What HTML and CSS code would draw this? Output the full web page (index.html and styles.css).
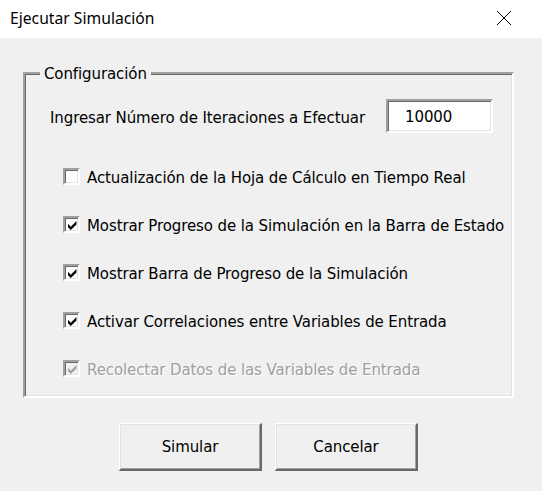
FILE: index.html
```html
<!DOCTYPE html>
<html lang="es">
<head>
<meta charset="utf-8">
<link rel="stylesheet" href="styles.css">
</head>
<body>
<div class="window">
  <div class="titlebar">
    <span class="title">Ejecutar Simulación</span>
    <svg class="close" width="16" height="16" viewBox="0 0 16 16"><path d="M1 1 L15 15 M15 1 L1 15" stroke="#000" stroke-width="1" fill="none"/></svg>
  </div>
  <div class="content">
    <div class="frame">
      <span class="legend">Configuración</span>
      <div class="iter-row">
        <span class="label">Ingresar Número de Iteraciones a Efectuar</span>
        <div class="textbox">10000</div>
      </div>
      <div class="checks">
        <div class="check-row">
          <span class="box"></span>
          <span class="label">Actualización de la Hoja de Cálculo en Tiempo Real</span>
        </div>
        <div class="check-row">
          <span class="box"><svg viewBox="0 0 8 8"><path d="M0 2.5 L2.5 5 L7.5 0 L7.5 3 L2.5 8 L0 5.5 Z" fill="#000"/></svg></span>
          <span class="label">Mostrar Progreso de la Simulación en la Barra de Estado</span>
        </div>
        <div class="check-row">
          <span class="box"><svg viewBox="0 0 8 8"><path d="M0 2.5 L2.5 5 L7.5 0 L7.5 3 L2.5 8 L0 5.5 Z" fill="#000"/></svg></span>
          <span class="label">Mostrar Barra de Progreso de la Simulación</span>
        </div>
        <div class="check-row">
          <span class="box"><svg viewBox="0 0 8 8"><path d="M0 2.5 L2.5 5 L7.5 0 L7.5 3 L2.5 8 L0 5.5 Z" fill="#000"/></svg></span>
          <span class="label">Activar Correlaciones entre Variables de Entrada</span>
        </div>
        <div class="check-row disabled">
          <span class="box"><svg viewBox="0 0 8 8"><path d="M0 2.5 L2.5 5 L7.5 0 L7.5 3 L2.5 8 L0 5.5 Z" fill="#a0a0a0"/></svg></span>
          <span class="label">Recolectar Datos de las Variables de Entrada</span>
        </div>
      </div>
    </div>
    <div class="buttons">
      <div class="btn">Simular</div>
      <div class="btn">Cancelar</div>
    </div>
  </div>
</div>
</body>
</html>
```
FILE: styles.css
```css
html, body {
  margin: 0;
  padding: 0;
  background: #f0f0f0;
}
.window {
  width: 542px;
  height: 491px;
  background: #f0f0f0;
  overflow: hidden;
}
.titlebar {
  height: 38px;
  background: #fff;
  display: flex;
  align-items: center;
  justify-content: space-between;
  padding: 0 30px 0 10px;
  box-sizing: border-box;
}
.title {
  font-family: "Noto Sans", sans-serif;
  font-size: 15.7px;
  color: #000;
  margin-top: -2px;
}
.close {
  display: block;
  margin-top: -2px;
}
.content {
  padding: 34px 0 0 23px;
}
.frame {
  position: relative;
  width: 491px;
  height: 326px;
  box-sizing: border-box;
  border-style: solid;
  border-width: 2px;
  border-color: #a0a0a0 #fff #fff #a0a0a0;
  box-shadow: inset 1px 1px 0 #696969, inset -1px -1px 0 #e3e3e3;
  padding: 25px 0 0 25px;
}
.legend,
.label,
.textbox,
.btn {
  font-family: "DejaVu Sans", sans-serif;
  font-size: 15px;
  letter-spacing: -0.1px;
  color: #000;
}
.legend {
  position: absolute;
  top: -10px;
  left: 15px;
  padding: 0 4px;
  background: #f0f0f0;
  line-height: 20px;
}
.label {
  white-space: nowrap;
  padding-top: 3px;
}
.iter-row {
  display: flex;
  align-items: center;
  height: 34px;
}
.iter-row .label {
  width: 336px;
}
.textbox {
  width: 107px;
  height: 34px;
  box-sizing: border-box;
  background: #fff;
  border-style: solid;
  border-width: 2px;
  border-color: #a0a0a0 #fff #fff #a0a0a0;
  box-shadow: inset 1px 1px 0 #696969, inset -1px -1px 0 #e3e3e3;
  padding: 2px 0 0 17px;
  display: flex;
  align-items: center;
}
.checks {
  margin-top: 19px;
  padding-left: 13px;
  display: flex;
  flex-direction: column;
}
.check-row {
  height: 48px;
  display: flex;
  align-items: center;
  gap: 7px;
}
.box {
  width: 17px;
  height: 17px;
  box-sizing: border-box;
  background: #fff;
  border-style: solid;
  border-width: 2px;
  border-color: #a0a0a0 #fff #fff #a0a0a0;
  box-shadow: inset 1px 1px 0 #696969, inset -1px -1px 0 #e3e3e3;
  display: flex;
  align-items: flex-start;
  justify-content: flex-start;
  padding: 3px 0 0 3px;
  flex: none;
}
.box svg {
  display: block;
  width: 9px;
  height: 9px;
}
.disabled .box {
  background: #f0f0f0;
}
.disabled .label {
  color: #a0a0a0;
  text-shadow: 1px 1px 0 #fff;
}
.buttons {
  display: flex;
  gap: 13px;
  padding: 25px 0 0 96px;
}
.btn {
  width: 143px;
  height: 48px;
  box-sizing: border-box;
  border-style: solid;
  border-width: 1px 2px 2px 1px;
  border-color: #fff #696969 #696969 #fff;
  box-shadow: inset 1px 1px 0 #e3e3e3, inset -1px -1px 0 #a0a0a0;
  background: #f0f0f0;
  display: flex;
  align-items: center;
  justify-content: center;
}
```
